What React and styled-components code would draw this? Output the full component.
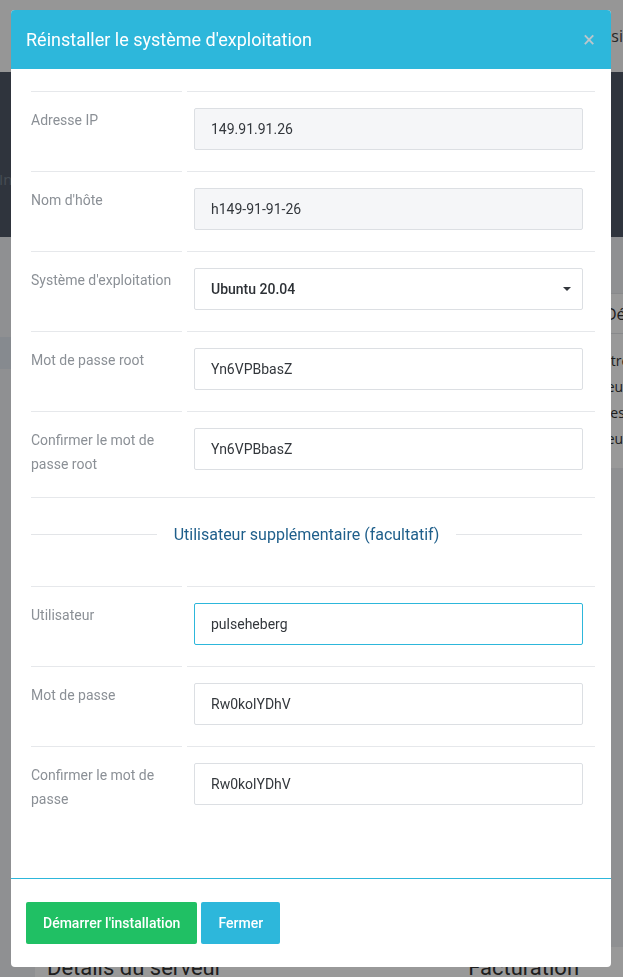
import React from "react";
import styled, {createGlobalStyle} from "styled-components";

const GlobalStyle = createGlobalStyle`
	* {
		box-sizing: border-box;
	}
	body {
		margin: 0;
		font-family: Roboto, "Liberation Sans", sans-serif;
		background: #eef0f3;
		overflow: hidden;
	}
`;

const mainFields = [
	{label: "Adresse IP", value: "149.91.91.26", readOnly: true},
	{label: "Nom d'hôte", value: "h149-91-91-26", readOnly: true},
	{label: "Système d'exploitation", value: "Ubuntu 20.04", select: true},
	{label: "Mot de passe root", value: "Yn6VPBbasZ"},
	{label: "Confirmer le mot de passe root", value: "Yn6VPBbasZ"},
];

const extraFields = [
	{label: "Utilisateur", value: "pulseheberg", active: true},
	{label: "Mot de passe", value: "Rw0kolYDhV"},
	{label: "Confirmer le mot de passe", value: "Rw0kolYDhV"},
];

function Field({field}) {
	if (field.select) {
		return (
			<SelectWrap>
				<Select defaultValue={field.value}>
					<option>Ubuntu 20.04</option>
					<option>Debian 11</option>
					<option>CentOS 8</option>
				</Select>
				<Caret />
			</SelectWrap>
		);
	}
	return (
		<Input
			defaultValue={field.value}
			readOnly={field.readOnly}
			$readOnly={field.readOnly}
			$active={field.active}
		/>
	);
}

function FormRow({field}) {
	return (
		<Row>
			<Label>{field.label}</Label>
			<FieldCell>
				<Field field={field} />
			</FieldCell>
		</Row>
	);
}

function App() {
	return (
		<>
			<GlobalStyle />
			<Page>
				<TopBar>
					<NavItem>Position</NavItem>
				</TopBar>
				<Hero>
					<HeroText>Interface</HeroText>
				</Hero>
				<Content>
					<SideTab />
					<InfoCard>
						<InfoHead>Détails</InfoHead>
						<InfoText>Être</InfoText>
						<InfoText>Jeu</InfoText>
						<InfoText>Les</InfoText>
						<InfoText>Jeu</InfoText>
					</InfoCard>
					<BottomCards>
						<CardTitle>Détails du serveur</CardTitle>
						<CardTitle>Facturation</CardTitle>
					</BottomCards>
				</Content>
			</Page>
			<Backdrop />
			<Dialog>
				<Modal>
					<Header>
						<Title>Réinstaller le système d'exploitation</Title>
						<Close>×</Close>
					</Header>
					<Body>
						{mainFields.map((f) => (
							<FormRow key={f.label} field={f} />
						))}
						<Section>
							<SectionLine />
							<SectionTitle>Utilisateur supplémentaire (facultatif)</SectionTitle>
							<SectionLine />
						</Section>
						{extraFields.map((f) => (
							<FormRow key={f.label} field={f} />
						))}
					</Body>
					<Footer>
						<Button $color="#20c064">Démarrer l'installation</Button>
						<Button $color="#2db7db">Fermer</Button>
					</Footer>
				</Modal>
			</Dialog>
		</>
	);
}

export default App;

/* page behind the modal */

const Page = styled.div`
	height: 977px;
	display: flex;
	flex-direction: column;
	color: #333;
`;

const TopBar = styled.div`
	height: 72px;
	background: #fbfbfb;
	display: flex;
	align-items: center;
	padding-left: 592px;
	white-space: nowrap;
	overflow: hidden;
`;

const NavItem = styled.span`
	font-size: 16px;
	color: #444;
	font-family: "Open Sans", sans-serif;
`;

const Hero = styled.div`
	height: 165px;
	background: #4f5866;
	display: flex;
	align-items: flex-start;
	padding-top: 98px;
	overflow: hidden;
`;

const HeroText = styled.span`
	margin-left: -1px;
	font-size: 15px;
	line-height: 18px;
	color: #76808d;
	font-family: "Open Sans", sans-serif;
	white-space: nowrap;
`;

const Content = styled.div`
	flex: 1;
	display: flex;
	flex-direction: column;
	position: relative;
	padding-top: 56px;
`;

const SideTab = styled.div`
	position: absolute;
	left: 0;
	top: 100px;
	width: 30px;
	height: 32px;
	background: #dfe6ee;
`;

const InfoCard = styled.div`
	margin-left: 600px;
	width: 300px;
	height: 175px;
	background: #ffffff;
	border-top: 1px solid #e3e5e8;
	font-family: "Open Sans", sans-serif;
`;

const InfoHead = styled.div`
	height: 40px;
	line-height: 40px;
	padding-left: 5px;
	font-size: 16px;
	border-bottom: 1px solid #e3e5e8;
	margin-bottom: 14px;
`;

const InfoText = styled.div`
	font-size: 14px;
	line-height: 26px;
	padding-left: 3px;
`;

const BottomCards = styled.div`
	margin-top: auto;
	margin-left: 35px;
	height: 30px;
	background: #ffffff;
	display: flex;
	padding: 0 12px;
	gap: 246px;
`;

const CardTitle = styled.span`
	font-size: 22px;
	line-height: 30px;
	padding-top: 6px;
	color: #333;
	white-space: nowrap;
`;

const Backdrop = styled.div`
	position: fixed;
	inset: 0;
	background: rgba(0, 0, 0, 0.4);
`;

/* modal */

const Dialog = styled.div`
	position: fixed;
	inset: 0;
	padding: 10px 12px 0 11px;
`;

const Modal = styled.div`
	width: 600px;
	background: #ffffff;
	border-radius: 4px;
	overflow: hidden;
`;

const Header = styled.div`
	height: 59px;
	background: #2db7db;
	display: flex;
	align-items: center;
	justify-content: space-between;
	padding: 0 16px 0 15px;
`;

const Title = styled.h4`
	margin: 0;
	font-size: 18px;
	font-weight: 400;
	color: #ffffff;
`;

const Close = styled.button`
	border: none;
	background: none;
	padding: 0;
	font-size: 22px;
	line-height: 1;
	color: #bcc6cb;
	font-family: Roboto, sans-serif;
	cursor: pointer;
`;

const Body = styled.div`
	padding: 22px 16px 46px 20px;
`;

const Row = styled.div`
	display: grid;
	grid-template-columns: 151px 408px;
	column-gap: 5px;
`;

const Label = styled.div`
	border-top: 1px solid #e6e8eb;
	padding: 16px 10px 21px 0;
	font-size: 14px;
	line-height: 24px;
	color: #8b9096;
`;

const FieldCell = styled.div`
	border-top: 1px solid #e6e8eb;
	padding: 16px 12px 21px 7px;
`;

const Input = styled.input`
	display: block;
	width: 100%;
	height: 42px;
	padding: 0 16px;
	border: 1px solid ${(p) => (p.$active ? "#2db7db" : "#dcdfe3")};
	border-radius: 2px;
	background: ${(p) => (p.$readOnly ? "#f5f6f8" : "#ffffff")};
	font-family: Roboto, sans-serif;
	font-size: 14px;
	color: #33373c;
	outline: none;
`;

const SelectWrap = styled.div`
	position: relative;
`;

const Select = styled.select`
	display: block;
	width: 100%;
	height: 42px;
	padding: 0 16px;
	border: 1px solid #dcdfe3;
	border-radius: 2px;
	background: #ffffff;
	appearance: none;
	font-family: Roboto, sans-serif;
	font-size: 14px;
	font-weight: 500;
	color: #2c3035;
	outline: none;
`;

const Caret = styled.span`
	position: absolute;
	right: 12px;
	top: 19px;
	width: 0;
	height: 0;
	border-left: 4px solid transparent;
	border-right: 4px solid transparent;
	border-top: 4px solid #33373c;
	pointer-events: none;
`;

const Section = styled.div`
	border-top: 1px solid #e6e8eb;
	height: 89px;
	padding: 27px 13px 0 0;
	display: flex;
	align-items: flex-start;
	gap: 17px;
`;

const SectionLine = styled.div`
	flex: 1;
	height: 1px;
	margin-top: 9px;
	background: #e3e5e8;
`;

const SectionTitle = styled.div`
	font-size: 16px;
	line-height: 20px;
	color: #1f5f8b;
	white-space: nowrap;
`;

const Footer = styled.div`
	border-top: 1px solid #2db7db;
	padding: 23px 15px 23px;
	display: flex;
	gap: 4px;
`;

const Button = styled.button`
	height: 42px;
	padding: 0 17px;
	border: none;
	border-radius: 2px;
	background: ${(p) => p.$color};
	color: #ffffff;
	font-family: Roboto, sans-serif;
	font-size: 14px;
	font-weight: 500;
	cursor: pointer;
`;
